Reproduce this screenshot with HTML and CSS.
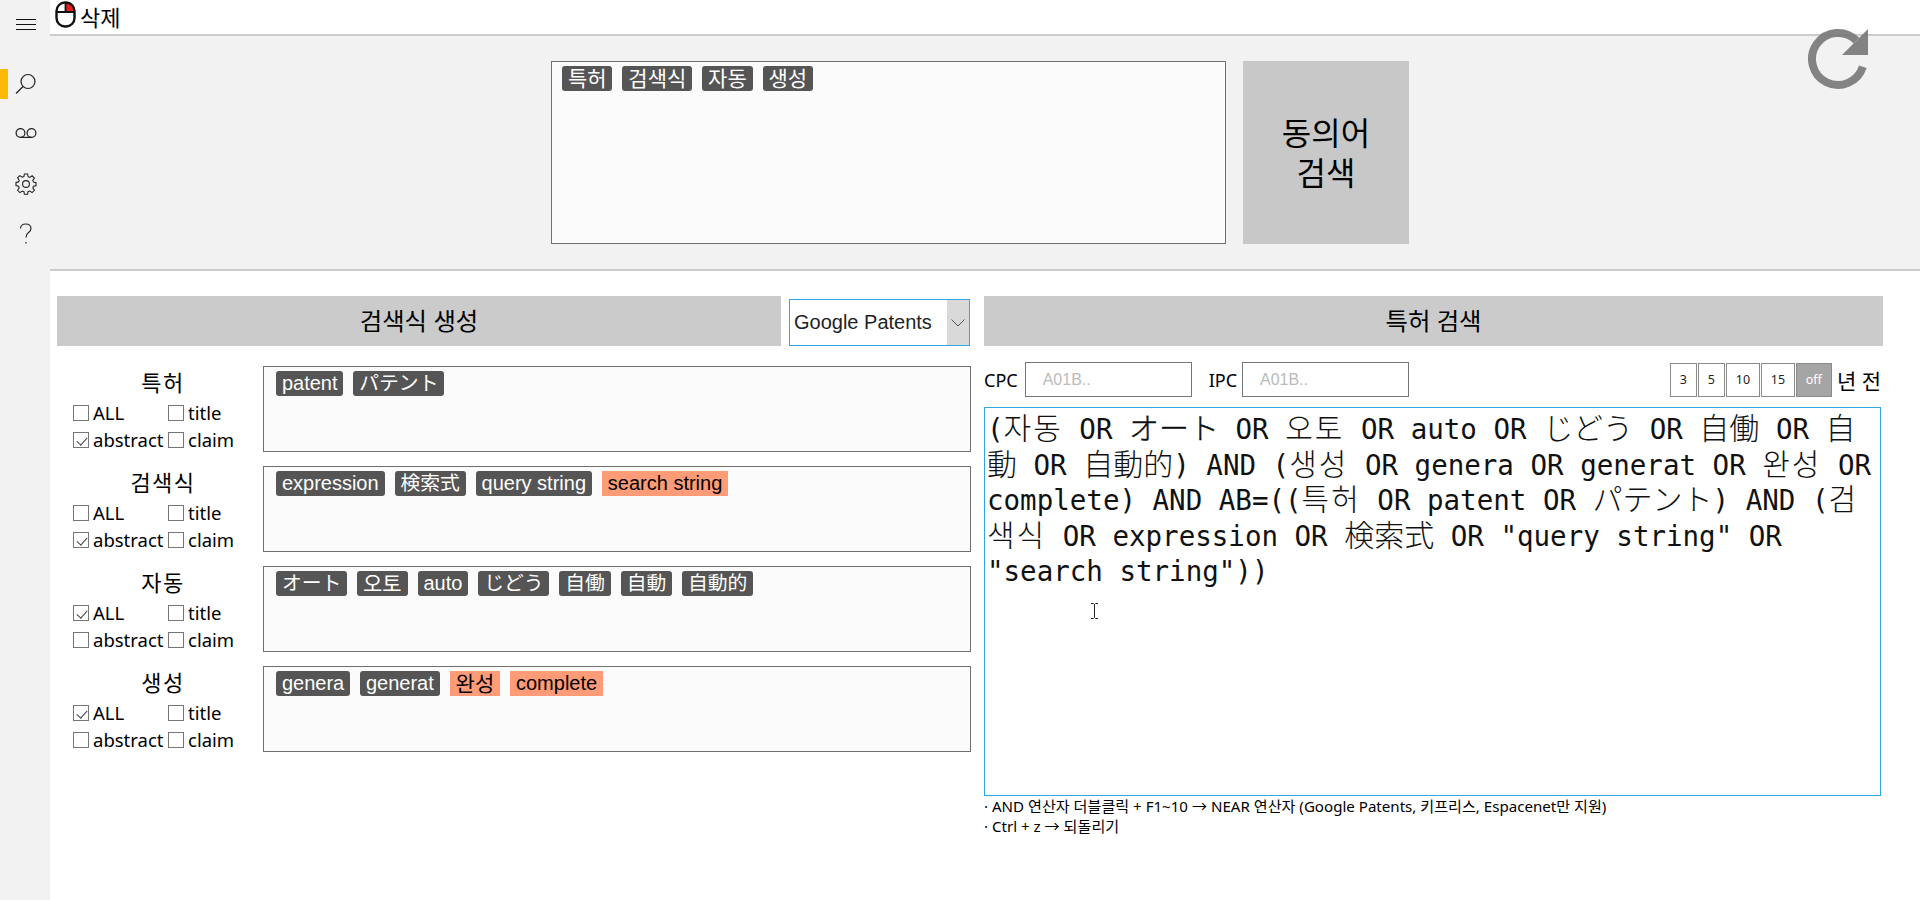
FILE: index.html
```html
<!DOCTYPE html>
<html lang="ko">
<head>
  <meta charset="UTF-8">
  <title>특허 검색식 생성</title>
  <link rel="stylesheet" href="styles.css">
</head>
<body>
  <div class="app">
    <!-- left icon rail -->
    <nav class="rail">
      <a class="rail-item rail-menu">
        <svg width="20" height="12" viewBox="0 0 20 12"><path d="M0 .5h20M0 5.5h20M0 10.5h20" stroke="#111" fill="none"/></svg>
      </a>
      <a class="rail-item rail-search active">
        <svg width="22" height="22" viewBox="0 0 22 22" fill="none" stroke="#222" stroke-width="1.2"><circle cx="13" cy="8.500" r="7"/><path d="M8 13.500 1 20.500"/></svg>
      </a>
      <a class="rail-item rail-voice">
        <svg width="22" height="12" viewBox="0 0 22 12" fill="none" stroke="#222" stroke-width="1.2"><circle cx="5.500" cy="6" r="4.400"/><circle cx="16.500" cy="6" r="4.400"/><path d="M5.500 10.400h11"/></svg>
      </a>
      <a class="rail-item rail-gear">
        <svg width="22" height="22" viewBox="0 0 22 22" fill="none" stroke="#222" stroke-width="1.1"><circle cx="11" cy="11" r="3.400"/><path d="M9.400 1h3.200l.5 2.700 1.700.7 2.300-1.600 2.300 2.300-1.600 2.300.7 1.700 2.500.5v3.200l-2.500.5-.7 1.700 1.600 2.300-2.300 2.300-2.300-1.600-1.700.7-.5 2.500H9.400l-.5-2.500-1.700-.7-2.300 1.600-2.300-2.300 1.600-2.300-.7-1.700L1 12.600V9.400l2.500-.5.7-1.700-1.600-2.300 2.300-2.300 2.300 1.600 1.700-.7z"/></svg>
      </a>
      <a class="rail-item rail-help">
        <svg width="14" height="22" viewBox="0 0 14 22" fill="none" stroke="#222" stroke-width="1.2"><path d="M1.500 5.500C1.500 2.800 3.800 1 6.800 1c3 0 5.200 1.900 5.200 4.600 0 2-1.100 3.100-2.700 4.200C7.700 10.900 7 12 7 14.500"/><path d="M7 19v1.600"/></svg>
      </a>
    </nav>

    <div class="content">
      <header class="topbar">
        <svg class="mouse-icon" width="21" height="27" viewBox="0 0 21 27">
          <path d="M11 2h2.500c2.800 0 5.500 2.500 5.500 6v2h-8z" fill="#e81c1c"/>
          <rect x="1.500" y="1.500" width="18" height="24" rx="8.500" fill="none" stroke="#111" stroke-width="2.400"/>
          <path d="M1.500 11h18M10.500 1.500V11" stroke="#111" stroke-width="1.800" fill="none"/>
        </svg>
        <span class="topbar-label">삭제</span>
      </header>

      <section class="synonym-panel">
        <div class="tag-box keyword-box">
          <span class="tag tag-ko">특허</span>
          <span class="tag tag-ko">검색식</span>
          <span class="tag tag-ko">자동</span>
          <span class="tag tag-ko">생성</span>
        </div>
        <button class="synonym-btn">동의어<br>검색</button>
      </section>

      <section class="workspace">
        <div class="col-left">
          <div class="col-head">
            <div class="head-bar head-build">검색식 생성</div>
            <div class="engine-select">
              <span class="engine-name">Google Patents</span>
              <span class="engine-arrow">
                <svg width="14" height="8" viewBox="0 0 14 8"><path d="M.5.5 7 7 13.500.5" fill="none" stroke="#555"/></svg>
              </span>
            </div>
          </div>

          <div class="term-row">
            <div class="term-side">
              <div class="term-name">특허</div>
              <div class="scope-grid">
                <label class="scope"><input type="checkbox">ALL</label>
                <label class="scope"><input type="checkbox">title</label>
                <label class="scope"><input type="checkbox" checked>abstract</label>
                <label class="scope"><input type="checkbox">claim</label>
              </div>
            </div>
            <div class="tag-box term-box">
              <span class="tag">patent</span>
              <span class="tag tag-ja">パテント</span>
            </div>
          </div>

          <div class="term-row">
            <div class="term-side">
              <div class="term-name">검색식</div>
              <div class="scope-grid">
                <label class="scope"><input type="checkbox">ALL</label>
                <label class="scope"><input type="checkbox">title</label>
                <label class="scope"><input type="checkbox" checked>abstract</label>
                <label class="scope"><input type="checkbox">claim</label>
              </div>
            </div>
            <div class="tag-box term-box">
              <span class="tag">expression</span>
              <span class="tag tag-ja">検索式</span>
              <span class="tag">query string</span>
              <span class="tag tag-new">search string</span>
            </div>
          </div>

          <div class="term-row">
            <div class="term-side">
              <div class="term-name">자동</div>
              <div class="scope-grid">
                <label class="scope"><input type="checkbox" checked>ALL</label>
                <label class="scope"><input type="checkbox">title</label>
                <label class="scope"><input type="checkbox">abstract</label>
                <label class="scope"><input type="checkbox">claim</label>
              </div>
            </div>
            <div class="tag-box term-box">
              <span class="tag tag-ja">オート</span>
              <span class="tag tag-ko">오토</span>
              <span class="tag">auto</span>
              <span class="tag tag-ja">じどう</span>
              <span class="tag tag-ja">自働</span>
              <span class="tag tag-ja">自動</span>
              <span class="tag tag-ja">自動的</span>
            </div>
          </div>

          <div class="term-row">
            <div class="term-side">
              <div class="term-name">생성</div>
              <div class="scope-grid">
                <label class="scope"><input type="checkbox" checked>ALL</label>
                <label class="scope"><input type="checkbox">title</label>
                <label class="scope"><input type="checkbox">abstract</label>
                <label class="scope"><input type="checkbox">claim</label>
              </div>
            </div>
            <div class="tag-box term-box">
              <span class="tag">genera</span>
              <span class="tag">generat</span>
              <span class="tag tag-ko tag-new">완성</span>
              <span class="tag tag-new">complete</span>
            </div>
          </div>
        </div>

        <div class="col-right">
          <div class="head-bar">특허 검색</div>

          <div class="filter-row">
            <label class="code-label">CPC</label>
            <input class="code-input" type="text" placeholder="A01B..">
            <label class="code-label code-label-ipc">IPC</label>
            <input class="code-input" type="text" placeholder="A01B..">
            <div class="years">
              <button class="year year-sm">3</button>
              <button class="year year-sm">5</button>
              <button class="year year-md">10</button>
              <button class="year year-md">15</button>
              <button class="year year-off">off</button>
            </div>
            <span class="years-label">년 전</span>
          </div>

          <div class="query-box">(<span class="wide ko">자동</span> OR <span class="wide heavy">オート</span> OR <span class="wide ko">오토</span> OR auto OR <span class="wide">じどう</span> OR <span class="wide">自働</span> OR <span class="wide">自</span><br><span class="wide">動</span> OR <span class="wide">自動的</span>) AND (<span class="wide ko">생성</span> OR genera OR generat OR <span class="wide ko">완성</span> OR<br>complete) AND AB=((<span class="wide ko">특허</span> OR patent OR <span class="wide">パテント</span>) AND (<span class="wide ko">검</span><br><span class="wide ko">색식</span> OR expression OR <span class="wide">検索式</span> OR "query string" OR<br>"search string"))<svg class="ibeam" width="9" height="16" viewBox="0 0 9 16"><path d="M1 .5h2.500l1 1 1-1H8M4.500 1.500v13M1 15.500h2.500l1-1 1 1H8" fill="none" stroke="#222"/></svg></div>

          <ul class="notes">
            <li>· AND 연산자 더블클릭 + F1~10 → NEAR 연산자 (Google Patents, 키프리스, Espacenet만 지원)</li>
            <li>· Ctrl + z → 되돌리기</li>
          </ul>
        </div>
      </section>
    </div>
  </div>

  <!-- refresh button sits over the top bar line -->
  <svg class="refresh" width="62" height="62" viewBox="0 0 62 62" fill="none">
    <path d="M55.800 38.800A26 26 0 1 1 49.400 12.600" stroke="#777" stroke-width="8"/>
    <path d="M61 1v26H35z" fill="#777"/>
  </svg>
</body>
</html>
```

FILE: styles.css
```css
* {
  box-sizing: border-box;
}

html, body {
  margin: 0;
  padding: 0;
}

body {
  background-color: #fff;
  color: #000;
  font-family: "Noto Sans", "Noto Sans CJK KR", sans-serif;
  overflow: hidden;
}

.app {
  display: flex;
  height: 900px;
}

/* icon rail */
.rail {
  width: 50px;
  background-color: #f2f2f2;
  flex: none;
  display: flex;
  flex-direction: column;
}

.rail-item {
  display: flex;
  align-items: center;
  justify-content: center;
  padding-left: 2px;
}

.rail-menu {
  height: 48px;
  margin-bottom: 21px;
  padding-top: 1px;
}

.rail-search {
  height: 30px;
  padding-left: 0;
  padding-right: 6px;
}

.rail-search.active {
  border-left: 8px solid #ffb900;
}

.rail-voice {
  height: 12px;
  margin-top: 28px;
}

.rail-gear {
  height: 22px;
  margin-top: 34px;
}

.rail-help {
  height: 22px;
  margin-top: 28px;
}

.content {
  flex: 1;
  min-width: 0;
}

/* top strip */
.topbar {
  height: 36px;
  border-bottom: 2px solid #ccc;
  display: flex;
  align-items: flex-start;
  padding: 1px 0 0 5px;
}

.topbar-label {
  font-size: 22px;
  line-height: 32px;
  margin-left: 4px;
}

.synonym-panel {
  height: 235px;
  background-color: #f2f2f2;
  border-bottom: 2px solid #ccc;
  padding: 25px 0 0 501px;
  display: flex;
  align-items: flex-start;
  gap: 17px;
}

.tag-box {
  background-color: #fbfbfb;
  border: 1px solid #707070;
  display: flex;
  flex-wrap: wrap;
  align-items: flex-start;
  gap: 10px;
}

.keyword-box {
  width: 675px;
  height: 183px;
  padding: 4px 10px;
}

.tag {
  background-color: #555;
  color: #fff;
  border-radius: 3px;
  font-family: "Liberation Sans", "Noto Sans CJK KR", sans-serif;
  font-size: 20px;
  line-height: 25px;
  height: 25px;
  padding: 0 5.9px;
  white-space: nowrap;
}

.tag-ko {
  font-size: 21px;
}

.tag-ja {
  font-size: 19.8px;
}

.tag-new {
  background-color: #ff9b77;
  color: #000;
  border-radius: 0;
}

.synonym-btn {
  width: 166px;
  height: 183px;
  background-color: #c8c8c8;
  border: none;
  font-family: inherit;
  font-size: 32px;
  line-height: 40px;
  padding: 0;
}

/* two working columns */
.workspace {
  display: flex;
  padding: 25px 0 0 7px;
  gap: 13px;
}

.col-left {
  width: 914px;
}

.col-right {
  width: 899px;
}

.col-head {
  display: flex;
  align-items: flex-end;
  gap: 8px;
  margin-bottom: 20px;
}

.head-bar {
  height: 50px;
  background-color: #cbcbcb;
  display: flex;
  align-items: center;
  justify-content: center;
  font-size: 24.4px;
  padding-bottom: 4px;
}

.head-build {
  width: 724px;
}

.engine-select {
  width: 181px;
  height: 47px;
  background-color: #fff;
  border: 1px solid #31a4e6;
  display: flex;
  align-items: stretch;
  font-family: "Liberation Sans", sans-serif;
  font-size: 20px;
  color: #222;
}

.engine-name {
  flex: 1;
  line-height: 44px;
  padding-left: 4px;
}

.engine-arrow {
  width: 22px;
  background-color: #d9d9d9;
  display: flex;
  align-items: center;
  justify-content: center;
}

.term-row {
  display: flex;
  height: 86px;
  margin-bottom: 14px;
}

.term-side {
  width: 206px;
  padding-left: 16px;
  flex: none;
}

.term-name {
  font-size: 22px;
  line-height: 30px;
  text-align: center;
  padding-right: 10px;
  letter-spacing: 1.5px;
  margin-top: 1px;
}

.scope-grid {
  display: grid;
  grid-template-columns: 95px 90px;
  grid-auto-rows: 27px;
  margin-top: 2px;
}

.scope {
  display: flex;
  align-items: center;
  font-size: 18.5px;
  line-height: 27px;
}

.scope input {
  appearance: none;
  width: 16px;
  height: 16px;
  margin: 0 4px 0 0;
  background-color: #fff;
  border: 1px solid #767676;
  position: relative;
}

.scope input:checked::after {
  content: "";
  position: absolute;
  left: 4.5px;
  top: 2px;
  width: 5px;
  height: 9px;
  border-right: 1px solid #444;
  border-bottom: 1px solid #444;
  transform: rotate(42deg);
}

.term-box {
  width: 708px;
  padding: 4px 12px;
  align-content: flex-start;
}

/* right column */
.filter-row {
  display: flex;
  align-items: center;
  height: 35px;
  margin: 16px 0 10px;
}

.code-label {
  font-size: 18px;
  margin-right: 7px;
}

.code-label-ipc {
  margin-left: 17px;
  margin-right: 5px;
}

.code-input {
  width: 167px;
  height: 35px;
  border: 1px solid #767676;
  background-color: #fff;
  font-family: "Liberation Sans", sans-serif;
  font-size: 16px;
  padding: 0 17px;
}

.code-input::placeholder {
  color: #bbb;
  opacity: 1;
}

.years {
  margin-left: auto;
  display: flex;
  gap: 1px;
}

.year {
  height: 34px;
  padding: 0;
  background-color: #fff;
  border: 1px solid #8a8a8a;
  font-family: inherit;
  font-size: 12.5px;
  color: #222;
}

.year-sm {
  width: 27px;
}

.year-md {
  width: 34px;
}

.year-off {
  width: 36px;
  background-color: #a5a5a5;
  color: #fff;
}

.years-label {
  font-size: 21px;
  margin: 0 2px 0 5px;
}

.query-box {
  position: relative;
  width: 897px;
  height: 389px;
  border: 1px solid #31a4e6;
  padding: 4px 2px;
  background-color: #fff;
  font-family: "DejaVu Sans Mono", "Noto Sans CJK KR", monospace;
  font-size: 27.5px;
  line-height: 35.6px;
  white-space: nowrap;
  color: #111;
}

.wide {
  font-family: "Noto Sans CJK KR", sans-serif;
  font-size: 30px;
  font-weight: 300;
  line-height: 0;
}

.ko {
  letter-spacing: 2px;
}

.heavy {
  -webkit-text-stroke: .4px;
}

.ibeam {
  position: absolute;
  left: 105px;
  top: 195px;
}

.refresh {
  position: absolute;
  left: 1807px;
  top: 28px;
  opacity: .9;
}

.notes {
  list-style: none;
  margin: 0;
  padding: 0;
  font-size: 15.1px;
  line-height: 20px;
}
```
